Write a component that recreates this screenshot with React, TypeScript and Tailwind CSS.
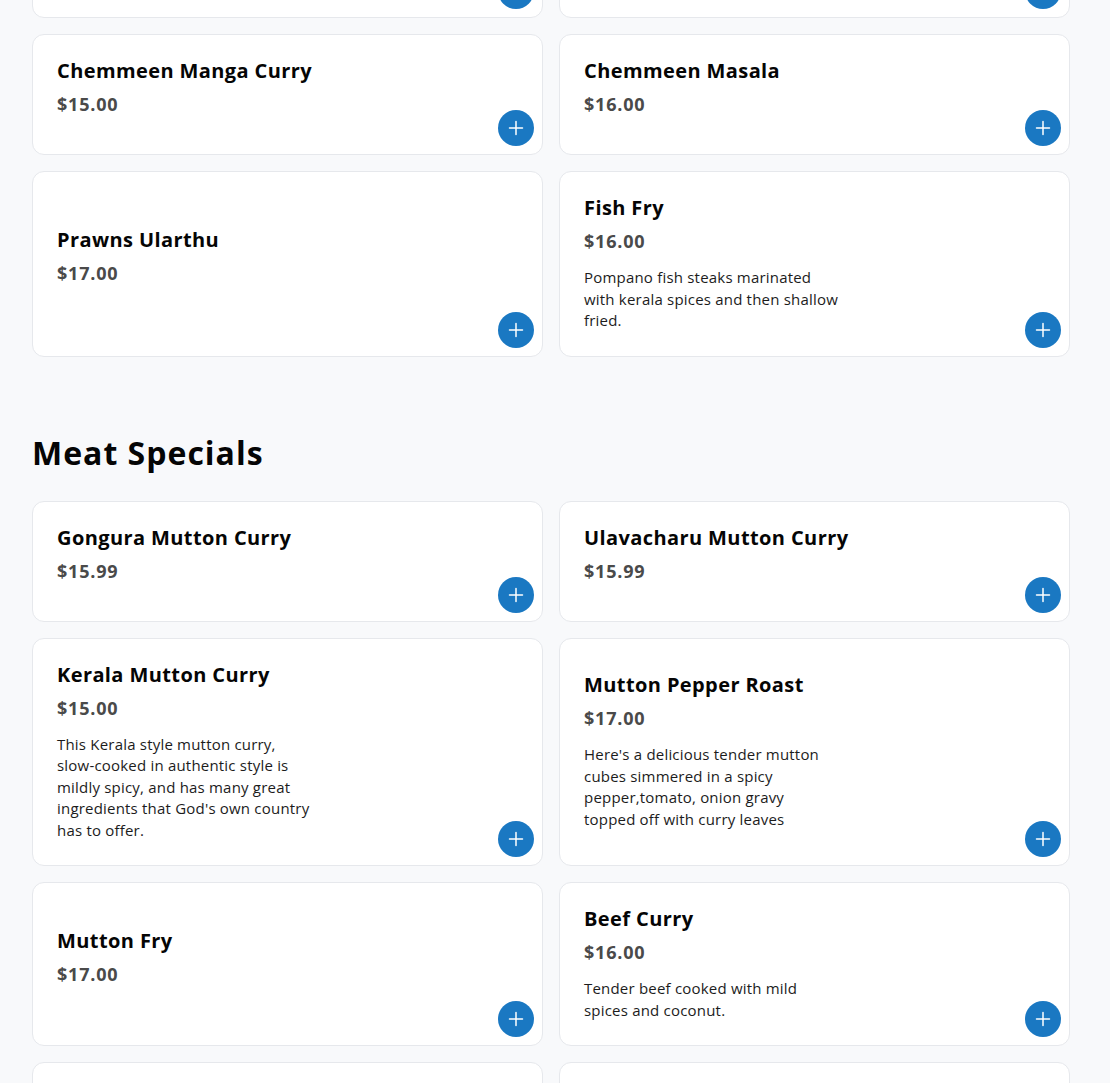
import React from "react";

type Item = { name: string; price: string; desc?: React.ReactNode };

const prevRow: Item[] = [
  { name: "Chemmeen Curry", price: "$15.00" },
  { name: "Chemmeen Roast", price: "$16.00" },
];

const seafood: Item[] = [
  { name: "Chemmeen Manga Curry", price: "$15.00" },
  { name: "Chemmeen Masala", price: "$16.00" },
  { name: "Prawns Ularthu", price: "$17.00" },
  {
    name: "Fish Fry",
    price: "$16.00",
    desc: "Pompano fish steaks marinated with kerala spices and then shallow fried.",
  },
];

const meat: Item[] = [
  { name: "Gongura Mutton Curry", price: "$15.99" },
  { name: "Ulavacharu Mutton Curry", price: "$15.99" },
  {
    name: "Kerala Mutton Curry",
    price: "$15.00",
    desc: "This Kerala style mutton curry, slow-cooked in authentic style is mildly spicy, and has many great ingredients that God's own country has to offer.",
  },
  {
    name: "Mutton Pepper Roast",
    price: "$17.00",
    desc: (
      <>
        Here's a delicious tender mutton cubes simmered in a spicy pepper,tomato, onion gravy{" "}
        <span className="whitespace-nowrap">topped off</span> with curry leaves
      </>
    ),
  },
  { name: "Mutton Fry", price: "$17.00" },
  {
    name: "Beef Curry",
    price: "$16.00",
    desc: "Tender beef cooked with mild spices and coconut.",
  },
  { name: "Chicken Curry", price: "$14.00" },
  { name: "Chicken Fry", price: "$15.00" },
];

function PlusButton() {
  return (
    <button className="absolute right-[8px] bottom-[8px] flex h-[36px] w-[36px] items-center justify-center rounded-full bg-[#1a78c2]">
      <svg width="18" height="18" viewBox="0 0 18 18" fill="none">
        <path d="M9 2.5v13M2.5 9h13" stroke="white" strokeWidth="1.5" strokeLinecap="round" />
      </svg>
    </button>
  );
}

function Card({ item }: { item: Item }) {
  return (
    <div className="relative flex items-center rounded-[12px] border border-[#e6e8ec] bg-white px-[24px] py-[24px]">
      <div className="flex flex-col">
        <h3 className="text-[20px] font-bold leading-[24px] tracking-[0.4px] text-[#050505]">{item.name}</h3>
        <div className="mt-[9px] text-[18px] font-bold leading-[24px] tracking-[0.8px] text-[#4a4a4a]">{item.price}</div>
        <p className="mt-[14px] max-w-[256px] text-[15px] leading-[21.5px] tracking-[0.2px] text-[#1c1c1c]">{item.desc ?? ""}</p>
      </div>
      <PlusButton />
    </div>
  );
}

export default function App() {
  return (
    <div
      className="min-h-screen bg-[#f8f9fb] pl-[32px] pr-[40px]"
      style={{ fontFamily: "'Open Sans', 'Noto Sans', sans-serif" }}
    >
      <div className="-mt-[103px] grid grid-cols-2 gap-x-[16px] gap-y-[16px]">
        {[...prevRow, ...seafood].map((it) => (
          <Card key={it.name} item={it} />
        ))}
      </div>
      <h2 className="mt-[76px] text-[32px] font-bold leading-[40px] tracking-[1px] text-[#050505]">Meat Specials</h2>
      <div className="mt-[28px] grid grid-cols-2 gap-x-[16px] gap-y-[16px] pb-[40px]">
        {meat.map((it) => (
          <Card key={it.name} item={it} />
        ))}
      </div>
    </div>
  );
}
